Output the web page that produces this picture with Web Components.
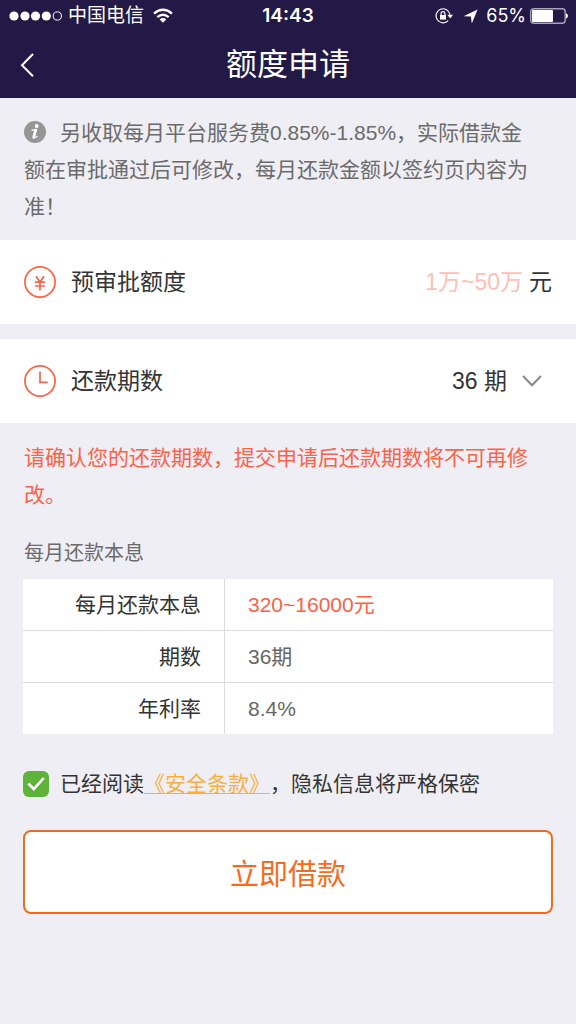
<!DOCTYPE html>
<html lang="zh-CN">
<head>
<meta charset="utf-8">
<meta name="viewport" content="width=device-width, initial-scale=1">
<title>额度申请</title>
<style>
  :root {
    --ink: #333;
    --muted: #6b6b6b;
    --accent: #ff6146;
    --orange: #f36a1c;
    --line: #dcdcdc;
    --page: #efeef4;
    --bar: #231946;
    --gutter: 24px;
  }
  body {
    margin: 0;
    background: var(--page);
    color: var(--ink);
    font-family: "Liberation Sans", "Noto Sans CJK SC", sans-serif;
    font-size: 21px;
    text-spacing-trim: space-all;
  }
</style>
</head>
<body>
<loan-page></loan-page>

<script>
const define = (name, html) => {
  const template = document.createElement('template');
  template.innerHTML = html;
  customElements.define(name, class extends HTMLElement {
    constructor() {
      super();
      this.attachShadow({ mode: 'open' }).append(template.content.cloneNode(true));
    }
  });
};

define('status-bar', `
<style>
  :host { display: grid; grid-template-columns: 1fr auto 1fr; align-items: center; height: 32px;
    padding: 0 8px; color: #fff; font-family: Inter, "Noto Sans CJK SC", sans-serif; font-size: 18px; line-height: 24px; }
  .side { display: flex; align-items: center; }
  .right { justify-content: flex-end; }
  .carrier { margin: 0 9px 0 6px; font-size: 19px; }
  .time { font-size: 19px; font-weight: 600; }
  .percent { margin: 0 4px 0 8px; }
  .arrow { margin-left: 10px; }
  svg { display: block; flex: none; }
</style>
<div class="side">
  <svg width="54" height="12" viewBox="0 0 54 12" fill="#fff"><circle cx="6" cy="6" r="4.6"/><circle cx="17" cy="6" r="4.6"/><circle cx="27.5" cy="6" r="4.6"/><circle cx="38.3" cy="6" r="4.6"/><circle cx="49.3" cy="6" r="4.1" fill="none" stroke="#fff"/></svg>
  <span class="carrier">中国电信</span>
  <svg width="20" height="16" viewBox="0 0 20 16" fill="none" stroke="#fff" stroke-width="2.3"><path d="M1 5.6Q10-2 19 5.6M4.3 9.1Q10 4.3 15.7 9.1"/><path d="M6.7 11.4Q10 8.8 13.3 11.4L10 14.8Z" fill="#fff" stroke="none"/></svg>
</div>
<span class="time">14:43</span>
<div class="side right">
  <svg width="18" height="16" viewBox="0 0 18 16" fill="none" stroke="#fff" stroke-width="1.2"><path d="M13.2 12.6A7 7 0 1 1 15 6.6"/><path d="M12.4 6.8H18L15.2 10.4Z" fill="#fff" stroke="none"/><path d="M5 7H11V11.6H5Z" fill="#fff" stroke="none"/><path d="M6.1 7V5.5a1.9 1.9 0 0 1 3.8 0V7"/></svg>
  <svg class="arrow" width="15" height="15" viewBox="0 0 15 15"><path d="M14.6.4 8.8 14.6 7.9 7.4 .6 7.2Z" fill="#fff"/></svg>
  <span class="percent">65%</span>
  <svg width="38" height="16" viewBox="0 0 38 16"><rect x=".7" y=".7" width="34.5" height="14.6" rx="3" fill="none" stroke="#aaa4bb" stroke-width="1.4"/><rect x="2" y="2" width="21" height="12" rx="1" fill="#fff"/><path d="M36 5.3q2 .8 2 2.7t-2 2.7Z" fill="#fff"/></svg>
</div>`);

define('nav-header', `
<style>
  :host { display: block; background: var(--bar); color: #fff; }
  nav { display: grid; grid-template-columns: 56px 1fr 56px; align-items: center; height: 66px; }
  button { display: flex; align-items: center; height: 56px; padding: 0 0 0 20px; border: 0; background: none; color: inherit; }
  h1 { margin: 0; font-size: 31px; font-weight: 400; line-height: 40px; text-align: center; }
</style>
<status-bar></status-bar>
<nav>
  <button type="button" aria-label="返回"><svg width="14" height="24" viewBox="0 0 14 24" fill="none" stroke="#fff" stroke-width="2"><path d="M13 1 2 12.3 13 23.3"/></svg></button>
  <h1><slot></slot></h1>
</nav>`);

define('page-note', `
<style>
  :host { display: block; padding: 16px 36px 15px var(--gutter); color: var(--muted); line-height: 37px; }
  :host([tone="warning"]) { color: var(--accent); padding-bottom: 0; }
  p { margin: 0; }
  ::slotted(svg) { width: 22px; height: 22px; margin-right: 14px; vertical-align: -3px; }
</style>
<p><slot name="icon"></slot><slot></slot></p>`);

define('form-row', `
<style>
  :host { display: flex; align-items: center; height: 84px; padding: 0 var(--gutter); background: #fff; font-size: 23px; line-height: 32px; }
  .icon { width: 32px; height: 32px; margin-right: 15px; }
  .field { display: flex; flex: 1; min-width: 0; align-items: center; justify-content: flex-end; }
</style>
<div class="icon"><slot name="icon"></slot></div>
<slot></slot>
<div class="field"><slot name="field"></slot></div>`);

define('amount-field', `
<style>
  :host { display: flex; align-items: center; }
  label { display: flex; align-items: center; gap: 6px; }
  input { width: 112px; padding: 0; border: 0; outline: 0; background: none; color: var(--accent); font: inherit; line-height: 32px; text-align: right; }
  input::placeholder { color: #ffbfb5; opacity: 1; }
</style>
<label><input type="text" inputmode="numeric" placeholder="1万~50万" aria-label="预审批额度"><span>元</span></label>`);

define('term-field', `
<style>
  :host { display: grid; align-items: center; justify-items: end; }
  select, svg { grid-area: 1 / 1; }
  select { appearance: none; height: 40px; padding: 0 45px 0 0; border: 0; background: none; color: inherit; font: inherit; }
  svg { margin-right: 10px; pointer-events: none; }
</style>
<select aria-label="还款期数"><option>12 期</option><option>24 期</option><option selected>36 期</option></select>
<svg width="20" height="12" viewBox="0 0 20 12" fill="none" stroke="#888" stroke-width="2"><path d="M1 1 10 10.3 19 1"/></svg>`);

define('repay-table', `
<style>
  :host { display: block; padding: 25px 23px 0; }
  table { width: 100%; border-spacing: 0; table-layout: fixed; line-height: 31px; }
  caption { padding: 0 1px 11px; color: var(--muted); font-size: 20px; line-height: 30px; text-align: left; }
  th, td { box-sizing: border-box; height: 51px; padding: 0 23px; background: #fff; font-weight: 400; }
  th { width: 202px; border-right: 1px solid var(--line); text-align: right; }
  td { color: #666; }
  tr + tr > * { height: 52px; border-top: 1px solid var(--line); }
  .strong { color: var(--accent); }
</style>
<table>
  <caption>每月还款本息</caption>
  <tbody>
    <tr><th scope="row">每月还款本息</th><td class="strong">320~16000元</td></tr>
    <tr><th scope="row">期数</th><td>36期</td></tr>
    <tr><th scope="row">年利率</th><td>8.4%</td></tr>
  </tbody>
</table>`);

define('agree-line', `
<style>
  :host { display: flex; align-items: center; padding: 34px 23px 0; line-height: 32px; }
  input { appearance: none; flex: none; width: 26px; height: 26px; margin: 0 11px 0 0; border-radius: 6px; background: #fff; }
  input:checked { background: #5eb339 url("data:image/svg+xml,%3Csvg xmlns='http://www.w3.org/2000/svg' viewBox='0 0 26 26'%3E%3Cpath d='M5.3 12.5 10.8 18 20.8 7' fill='none' stroke='white' stroke-width='2.6'/%3E%3C/svg%3E"); }
  a { color: #fbae3c; text-decoration: underline; text-decoration-thickness: 1px; text-underline-offset: 2px; text-decoration-skip-ink: none; }
</style>
<input type="checkbox" id="agree" checked>
<label for="agree">已经阅读<a href="#terms">《安全条款》</a>&#xFF0C;隐私信息将严格保密</label>`);

define('submit-button', `
<style>
  :host { display: block; padding: 30px 23px 0; }
  button { display: block; width: 100%; height: 84px; padding: 0; border: 2px solid var(--orange); border-radius: 8px;
    background: #fff; color: #f96a1d; font: inherit; font-size: 29px; }
</style>
<button type="button"><slot></slot></button>`);

define('loan-page', `
<style>
  :host { display: block; }
  .rows { display: grid; gap: 15px; }
  main { padding-bottom: 32px; }
</style>
<nav-header>额度申请</nav-header>
<main>
  <page-note><svg slot="icon" viewBox="0 0 22 22"><circle cx="11" cy="11" r="11" fill="#969696"/><circle cx="12.7" cy="5" r="1.9" fill="#fff"/><path d="M7.6 9.3 12.3 8.6 10.2 16Q10 17.8 13.4 15.2" fill="none" stroke="#fff" stroke-width="1.3"/><path d="M11.6 9.2 9.6 16.4" stroke="#fff" stroke-width="2.6" stroke-linecap="round"/></svg>另收取每月平台服务费0.85%-1.85%&#xFF0C;实际借款金额在审批通过后可修改&#xFF0C;每月还款金额以签约页内容为准&#xFF01;</page-note>
  <div class="rows">
    <form-row>
      <svg slot="icon" width="32" height="32" viewBox="0 0 32 32" fill="none" stroke="#ff6146" stroke-width="1.7"><circle cx="16" cy="16" r="15.1"/><path d="M12 10.3 16 16 20 10.3M11 16.2H21M11 20H21M16 16V24.5"/></svg>
      预审批额度
      <amount-field slot="field"></amount-field>
    </form-row>
    <form-row>
      <svg slot="icon" width="32" height="32" viewBox="0 0 32 32" fill="none" stroke="#ff6146" stroke-width="1.7"><circle cx="16" cy="16" r="15.1"/><path d="M16 6.5V17.3H23.8"/></svg>
      还款期数
      <term-field slot="field"></term-field>
    </form-row>
  </div>
  <page-note tone="warning">请确认您的还款期数&#xFF0C;提交申请后还款期数将不可再修改。</page-note>
  <repay-table></repay-table>
  <agree-line></agree-line>
  <submit-button>立即借款</submit-button>
</main>`);
</script>
</body>
</html>
